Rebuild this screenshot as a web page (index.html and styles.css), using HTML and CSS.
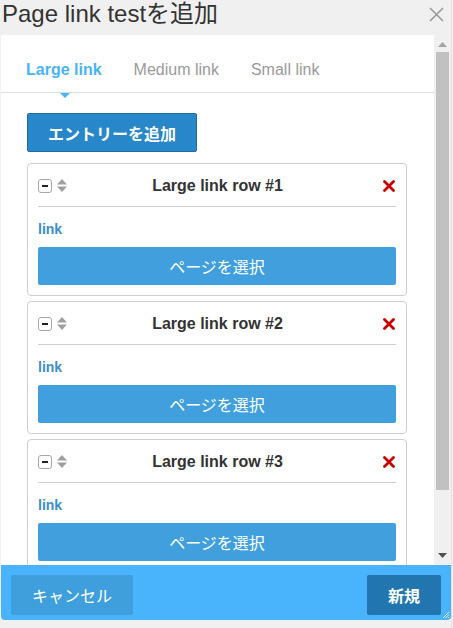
FILE: index.html
```html
<!DOCTYPE html>
<html lang="ja">
<head>
<meta charset="utf-8">
<title>Page link testを追加</title>
<link rel="stylesheet" href="styles.css">
</head>
<body>
<div class="dialog">
  <div class="title-bar">
    <h1 class="title">Page link testを追加</h1>
    <button class="close" aria-label="閉じる">
      <svg width="15" height="15" viewBox="0 0 15 15"><path d="M1 1L14 14M14 1L1 14" stroke="#9a9a9a" stroke-width="1.6" fill="none"/></svg>
    </button>
  </div>

  <div class="body">
    <div class="content">
      <div class="tabs">
        <span class="tab active">Large link</span>
        <span class="tab">Medium link</span>
        <span class="tab">Small link</span>
      </div>

      <div class="pane">
        <button class="add-entry">エントリーを追加</button>

        <div class="row-card">
          <div class="row-head">
            <span class="collapse"><i></i></span>
            <svg class="sort" width="10" height="13" viewBox="0 0 10 13"><path d="M5 0L10 5.5H0Z M5 13L0 7.5H10Z" fill="#a0a0a0"/></svg>
            <span class="row-title">Large link row #1</span>
            <svg class="remove" width="12" height="12" viewBox="0 0 12 12"><path d="M1.5 1.5L10.5 10.5M10.5 1.5L1.5 10.5" stroke="#c80000" stroke-width="2.8" stroke-linecap="round"/></svg>
          </div>
          <div class="field-label">link</div>
          <button class="select-page">ページを選択</button>
        </div>

        <div class="row-card">
          <div class="row-head">
            <span class="collapse"><i></i></span>
            <svg class="sort" width="10" height="13" viewBox="0 0 10 13"><path d="M5 0L10 5.5H0Z M5 13L0 7.5H10Z" fill="#a0a0a0"/></svg>
            <span class="row-title">Large link row #2</span>
            <svg class="remove" width="12" height="12" viewBox="0 0 12 12"><path d="M1.5 1.5L10.5 10.5M10.5 1.5L1.5 10.5" stroke="#c80000" stroke-width="2.8" stroke-linecap="round"/></svg>
          </div>
          <div class="field-label">link</div>
          <button class="select-page">ページを選択</button>
        </div>

        <div class="row-card">
          <div class="row-head">
            <span class="collapse"><i></i></span>
            <svg class="sort" width="10" height="13" viewBox="0 0 10 13"><path d="M5 0L10 5.5H0Z M5 13L0 7.5H10Z" fill="#a0a0a0"/></svg>
            <span class="row-title">Large link row #3</span>
            <svg class="remove" width="12" height="12" viewBox="0 0 12 12"><path d="M1.5 1.5L10.5 10.5M10.5 1.5L1.5 10.5" stroke="#c80000" stroke-width="2.8" stroke-linecap="round"/></svg>
          </div>
          <div class="field-label">link</div>
          <button class="select-page">ページを選択</button>
        </div>
      </div>
    </div>

    <div class="scrollbar">
      <svg class="arrow" width="9" height="5" viewBox="0 0 9 5"><path d="M4.5 0L9 5H0Z" fill="#a3a3a3"/></svg>
      <div class="thumb"></div>
      <div class="track-rest"></div>
      <svg class="arrow" width="9" height="5" viewBox="0 0 9 5"><path d="M0 0H9L4.5 5Z" fill="#505050"/></svg>
    </div>
  </div>

  <div class="footer">
    <button class="btn cancel">キャンセル</button>
    <button class="btn create">新規</button>
    <svg class="grip" width="8" height="8" viewBox="0 0 8 8"><path d="M7 1L1 7M7 3.5L3.5 7M7 6L6 7" stroke="#ffffff" stroke-width="1" opacity="0.8"/></svg>
  </div>
</div>
</body>
</html>
```

FILE: styles.css
```css
* {
  box-sizing: border-box;
}

html, body {
  margin: 0;
  padding: 0;
  background: #f0f0f0;
}

body {
  font-family: "Liberation Sans", Arial, "Noto Sans CJK JP", sans-serif;
  color: #333;
  width: 453px;
  height: 628px;
  overflow: hidden;
}

button {
  font-family: inherit;
  border: 0;
  cursor: pointer;
}

.dialog {
  width: 452px;
  padding-left: 1px;
  border-right: 1px solid #f3dbe6;
  height: 628px;
  display: flex;
  flex-direction: column;
}

/* title bar */
.title-bar {
  height: 35px;
  display: flex;
  justify-content: space-between;
  align-items: flex-start;
}

.title {
  margin: 0 0 0 1px;
  font-size: 24px;
  font-weight: normal;
  line-height: 28px;
  color: #333;
}

.close {
  background: none;
  padding: 0;
  margin: 7px 7px 0 0;
  width: 15px;
  height: 15px;
  display: flex;
}

/* scrolling body */
.body {
  height: 530px;
  display: flex;
}

.content {
  flex: 1;
  background: #fff;
  overflow: hidden;
}

.tabs {
  display: flex;
  padding: 25px 0 12px 9px;
  border-bottom: 1px solid #ddd;
}

.tab {
  position: relative;
  padding: 0 16px;
  font-size: 16px;
  line-height: 20px;
  color: #9a9a9a;
}

.tab.active {
  color: #48b3f9;
  font-weight: bold;
}

.tab.active::after {
  content: "";
  position: absolute;
  left: 50%;
  top: 33px;
  margin-left: -4px;
  border-left: 5px solid transparent;
  border-right: 5px solid transparent;
  border-top: 5px solid #48b3f9;
}

.pane {
  padding: 20px 27px 0 26px;
  display: flex;
  flex-direction: column;
  align-items: flex-start;
}

.add-entry {
  height: 39px;
  width: 170px;
  background: #2787c9;
  border: 1px solid #1d6da4;
  border-radius: 2px;
  color: #fff;
  font-size: 16px;
  font-weight: bold;
  margin-bottom: 11px;
}

.row-card {
  align-self: stretch;
  border: 1px solid #cfcfcf;
  border-radius: 4px;
  padding: 0 10px 10px;
  margin-bottom: 5px;
}

.row-head {
  height: 43px;
  border-bottom: 1px solid #cfcfcf;
  display: flex;
  align-items: center;
  gap: 5px;
  padding-top: 1px;
}

.collapse {
  width: 14px;
  height: 14px;
  border: 1px solid #a8a8a8;
  border-radius: 3px;
  display: flex;
  align-items: center;
  justify-content: center;
}

.collapse i {
  width: 6px;
  height: 2px;
  background: #222;
}

.sort {
  display: block;
}

.row-title {
  flex: 1;
  text-align: center;
  font-size: 16px;
  font-weight: bold;
  color: #333;
  margin-right: 15px;
}

.remove {
  display: block;
  margin-right: 1px;
}

.field-label {
  margin: 12px 0 8px;
  font-size: 14px;
  line-height: 20px;
  font-weight: bold;
  color: #3b8fcb;
}

.select-page {
  display: block;
  width: 100%;
  height: 38px;
  background: #409fdc;
  border-radius: 2px;
  color: #fff;
  font-size: 16px;
}

/* scrollbar column */
.scrollbar {
  width: 17px;
  background: #f0f0f0;
  display: flex;
  flex-direction: column;
  align-items: center;
  padding: 7px 0 7px;
}

.arrow {
  display: block;
}

.thumb {
  width: 13px;
  height: 438px;
  margin-top: 5px;
  background: #c1c1c1;
}

.track-rest {
  flex: 1;
}

/* footer */
.footer {
  position: relative;
  height: 55px;
  background: #49b4fb;
  border-radius: 0 0 4px 4px;
  padding: 10px;
  display: flex;
  justify-content: space-between;
}

.btn {
  height: 40px;
  border-radius: 2px;
  color: #fff;
  font-size: 16px;
}

.cancel {
  width: 122px;
  background: #3f9fdc;
}

.create {
  width: 74px;
  background: #2176b0;
  font-weight: bold;
}

.grip {
  position: absolute;
  right: 1px;
  bottom: 1px;
}
```
